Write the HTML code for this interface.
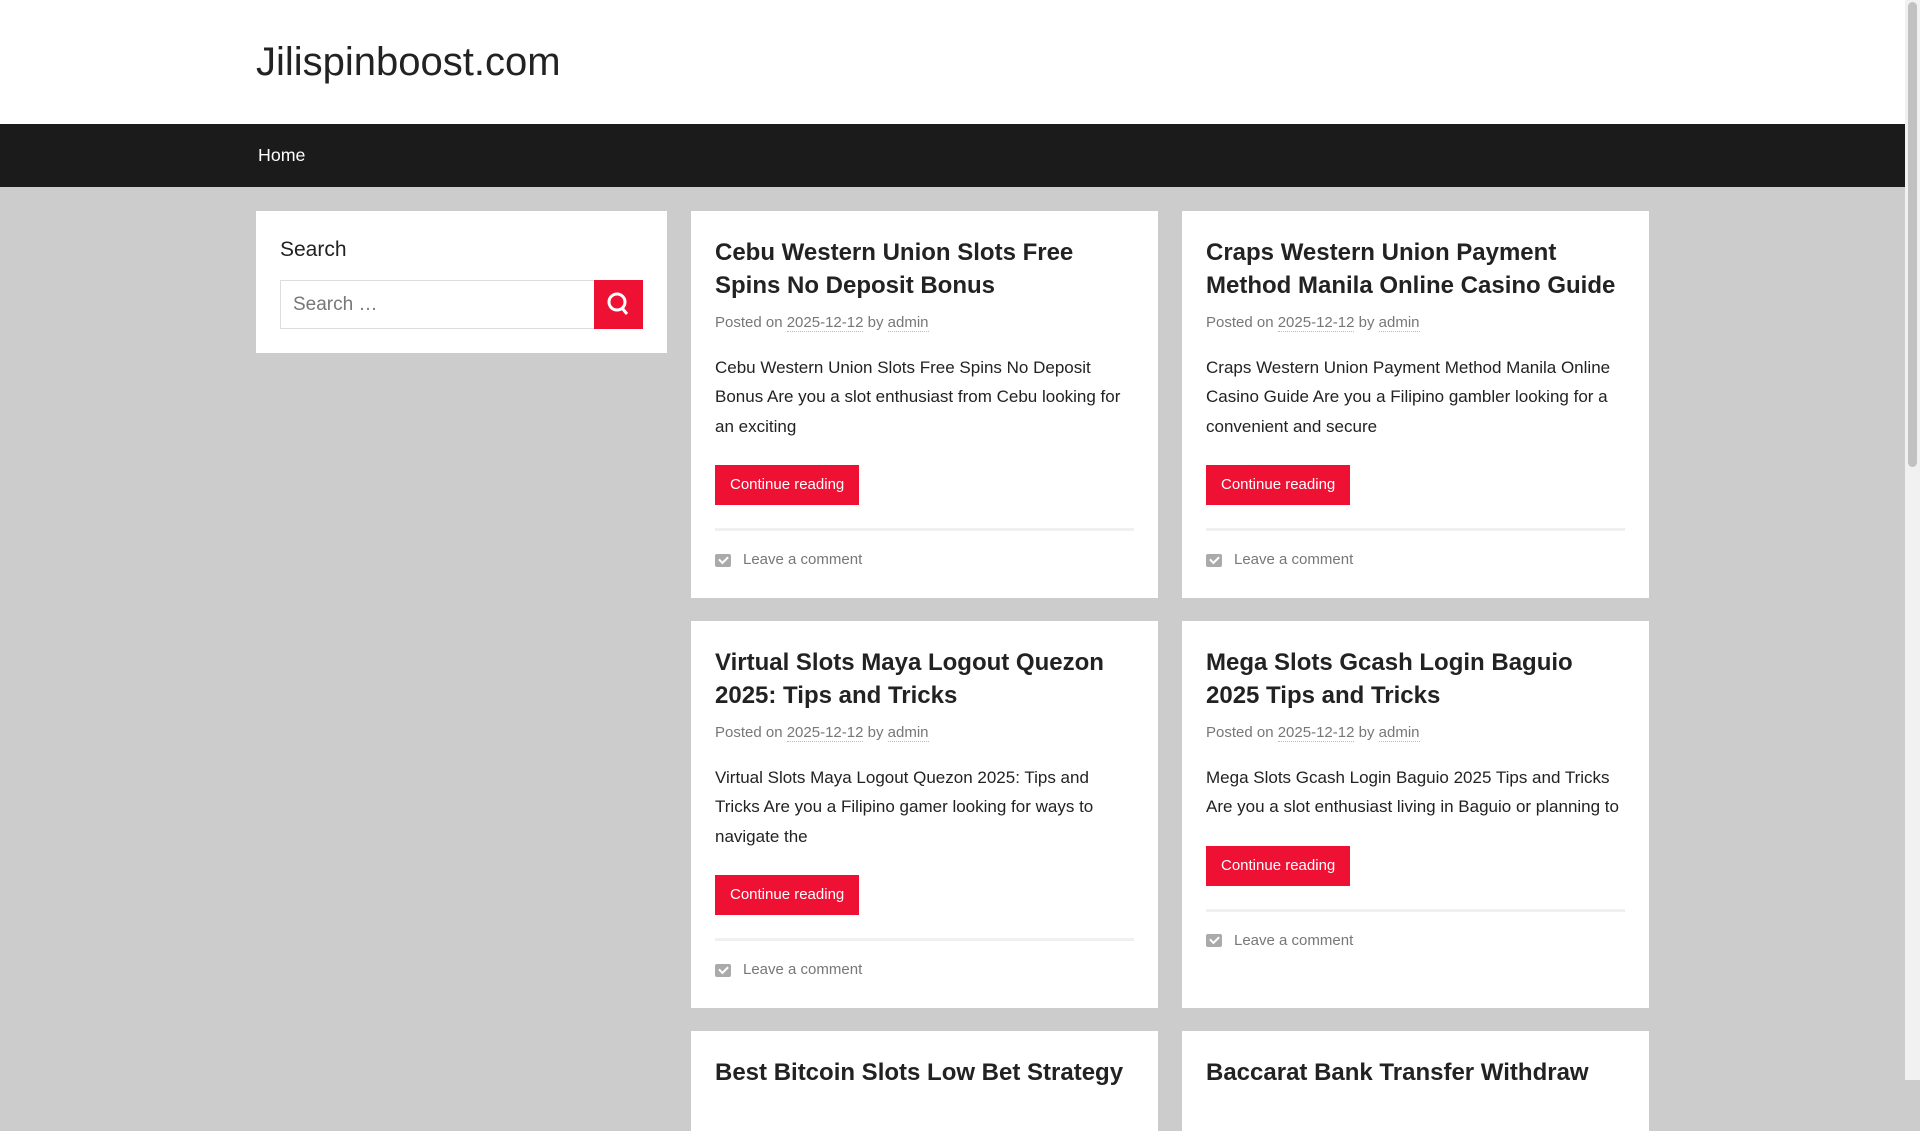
<!DOCTYPE html>
<html><head><meta charset="utf-8"><style>
*{box-sizing:border-box;margin:0;padding:0}
body{width:1920px;height:1080px;overflow:hidden;background:#ccc;font-family:"Liberation Sans",Arial,sans-serif;color:#222;position:relative}
.header{position:absolute;left:0;top:0;width:1905px;height:124px;background:#fff}
.header h1{position:absolute;left:256px;top:37px;font-size:40px;font-weight:400;color:#222;line-height:50px}
.nav{position:absolute;left:0;top:124px;width:1905px;height:63px;background:#1b1b1b}
.nav a{position:absolute;left:258px;top:21px;color:#fff;font-size:17.8px;text-decoration:none}
.sb{position:absolute;right:0;top:0;width:15px;height:1080px;background:#f1f1f1}
.sb div{position:absolute;left:3px;top:2px;width:9px;height:465px;background:#c1c1c1;border-radius:5px}
.side{position:absolute;left:256px;top:211px;width:411px;height:142px;background:#fff}
.side h3{position:absolute;left:24px;top:27px;font-size:21px;font-weight:400}
.side .in{position:absolute;left:24px;top:69px;width:315px;height:49px;border:1px solid #ddd;color:#777;font-size:19px;padding:13px 12px}
.side .bt{position:absolute;left:338px;top:69px;width:49px;height:49px;background:#ee1133}
.card{position:absolute;width:467px;background:#fff;padding:25px 24px 0}
.card h2{font-size:24px;line-height:33px;font-weight:700;color:#222}
.meta{margin-top:9px;font-size:15px;line-height:24px;color:#777}
.meta span{border-bottom:1px dotted #bbb}
.card p{margin-top:18px;font-size:17px;line-height:29.4px}
.btn{display:inline-block;margin-top:24px;height:40px;line-height:40px;padding:0 15px;background:#ee1133;color:#fff;font-size:15px}
.hr{margin-top:23px;height:3px;background:#f0f0f0}
.cm{margin-top:17px;font-size:15px;color:#777;line-height:24px;display:flex;align-items:center}
.cm i{display:inline-block;width:16px;height:13px;background:#aaa;border-radius:2px;margin-right:12px;position:relative}
.cm i:after{content:"";position:absolute;left:4px;top:2px;width:7px;height:4px;border:solid #fff;border-width:0 0 2px 2px;transform:rotate(-45deg)}
</style></head><body>
<div class="header"><h1>Jilispinboost.com</h1></div>
<div class="nav"><a>Home</a></div>
<div class="side"><h3>Search</h3><div class="in">Search …</div><div class="bt"><svg width="49" height="49" viewBox="0 0 49 49"><circle cx="23" cy="22" r="8" fill="none" stroke="#fff" stroke-width="3"/><line x1="28" y1="28" x2="33" y2="34" stroke="#fff" stroke-width="3"/></svg></div></div>

<div class="card" style="left:691px;top:211px;height:387px"><h2>Cebu Western Union Slots Free Spins No Deposit Bonus</h2><div class="meta">Posted on <span>2025-12-12</span> by <span>admin</span></div><p>Cebu Western Union Slots Free Spins No Deposit Bonus Are you a slot enthusiast from Cebu looking for an exciting</p><span class="btn">Continue reading</span><div class="hr"></div><div class="cm"><i></i>Leave a comment</div></div>

<div class="card" style="left:1182px;top:211px;height:387px"><h2>Craps Western Union Payment Method Manila Online Casino Guide</h2><div class="meta">Posted on <span>2025-12-12</span> by <span>admin</span></div><p>Craps Western Union Payment Method Manila Online Casino Guide Are you a Filipino gambler looking for a convenient and secure</p><span class="btn">Continue reading</span><div class="hr"></div><div class="cm"><i></i>Leave a comment</div></div>

<div class="card" style="left:691px;top:621px;height:387px"><h2>Virtual Slots Maya Logout Quezon 2025: Tips and Tricks</h2><div class="meta">Posted on <span>2025-12-12</span> by <span>admin</span></div><p>Virtual Slots Maya Logout Quezon 2025: Tips and Tricks Are you a Filipino gamer looking for ways to navigate the</p><span class="btn">Continue reading</span><div class="hr"></div><div class="cm"><i></i>Leave a comment</div></div>

<div class="card" style="left:1182px;top:621px;height:387px"><h2>Mega Slots Gcash Login Baguio 2025 Tips and Tricks</h2><div class="meta">Posted on <span>2025-12-12</span> by <span>admin</span></div><p>Mega Slots Gcash Login Baguio 2025 Tips and Tricks Are you a slot enthusiast living in Baguio or planning to</p><span class="btn">Continue reading</span><div class="hr"></div><div class="cm"><i></i>Leave a comment</div></div>

<div class="card" style="left:691px;top:1031px;height:100px"><h2>Best Bitcoin Slots Low Bet Strategy</h2></div>
<div class="card" style="left:1182px;top:1031px;height:100px"><h2>Baccarat Bank Transfer Withdraw</h2></div>
<div class="sb"><div></div></div>
</body></html>
